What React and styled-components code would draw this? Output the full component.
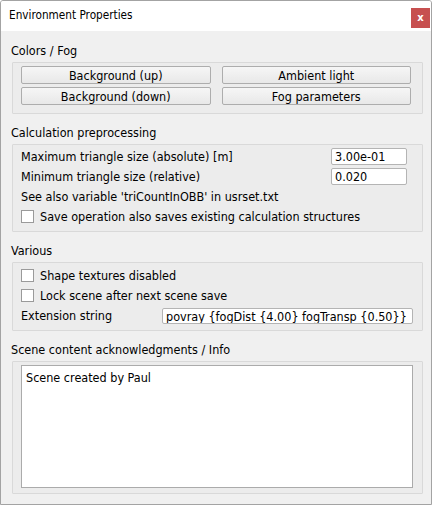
import React from 'react'
import styled, { createGlobalStyle } from 'styled-components'

const GlobalStyle = createGlobalStyle`
  html, body {
    margin: 0;
    padding: 0;
    background: #ffffff;
  }
  body {
    font-family: "DejaVu Sans Condensed", "DejaVu Sans", sans-serif;
    font-size: 12.5px;
    color: #000;
  }
`

const Window = styled.div`
  width: 432px;
  height: 505px;
  box-sizing: border-box;
  border: 1px solid #a3a3a3;
  border-radius: 3px 3px 0 0;
  display: flex;
  flex-direction: column;
  background: #f0f0f0;
  overflow: hidden;
`

const TitleBar = styled.div`
  height: 30px;
  flex: none;
  background: #ffffff;
  display: flex;
  align-items: center;
  padding: 0 1px 0 8px;
  font-size: 11.7px;
`

const Title = styled.span`
  flex: 1;
  margin-top: -2px;
`

const CloseButton = styled.button`
  width: 19px;
  height: 20px;
  margin-top: 4px;
  border: none;
  padding: 0;
  background: #c75050;
  color: #fff;
  font-family: "DejaVu Sans", sans-serif;
  font-weight: bold;
  font-size: 10px;
  line-height: 20px;
`

const Body = styled.div`
  flex: 1;
  display: flex;
  flex-direction: column;
  padding: 12px 8px 0 10px;
`

const Caption = styled.div`
  height: 16px;
  line-height: 16px;
  margin: ${({ $first }) => ($first ? '0' : '11px')} 0 3px 0;
`

const Group = styled.div`
  margin-left: 1px;
  border: 1px solid #d9d9d9;
  background: #ececec;
  border-radius: 1px;
  padding: ${({ $pad }) => $pad || '3px 11px 8px 8px'};
  display: flex;
  flex-direction: column;
  gap: ${({ $gap }) => $gap || '3px'};
  flex: ${({ $grow }) => ($grow ? 1 : 'none')};
`

const ButtonGrid = styled.div`
  display: grid;
  grid-template-columns: 1fr 1fr;
  column-gap: 11px;
  row-gap: 3px;
`

const PushButton = styled.button`
  height: 18px;
  box-sizing: border-box;
  border: 1px solid #adadad;
  border-radius: 2px;
  background: linear-gradient(#f6f6f6, #e8e8e8);
  font-family: inherit;
  font-size: 12.5px;
  color: #000;
  padding: 0;
  line-height: 15px;
`

const FormRow = styled.div`
  display: flex;
  align-items: center;
  justify-content: space-between;
  height: 17px;
`

const Field = styled.div`
  width: ${({ $w }) => $w}px;
  height: ${({ $h }) => $h || 17}px;
  box-sizing: border-box;
  border: 1px solid #b4b4b4;
  border-radius: 2px;
  background: #fff;
  padding: 0 3px;
  line-height: 15px;
  white-space: nowrap;
  overflow: hidden;
`

const Note = styled.div`
  height: 16px;
  line-height: 16px;
  margin-top: ${({ $mt }) => $mt || 0}px;
`

const CheckRow = styled.label`
  display: flex;
  align-items: center;
  gap: 6px;
  height: ${({ $h }) => $h || 17}px;
`

const CheckBox = styled.span`
  width: 13px;
  height: 13px;
  box-sizing: border-box;
  border: 1px solid #9a9a9a;
  background: #fff;
  flex: none;
`

const InfoArea = styled.div`
  flex: 1;
  border: 1px solid #ababab;
  background: #fff;
  padding: 4px 4px;
  line-height: 16px;
`

export default function App() {
  return (
    <>
      <GlobalStyle />
      <Window>
        <TitleBar>
          <Title>Environment Properties</Title>
          <CloseButton>x</CloseButton>
        </TitleBar>
        <Body>
          <Caption $first>Colors / Fog</Caption>
          <Group>
            <ButtonGrid>
              <PushButton>Background (up)</PushButton>
              <PushButton>Ambient light</PushButton>
              <PushButton>Background (down)</PushButton>
              <PushButton>Fog parameters</PushButton>
            </ButtonGrid>
          </Group>

          <Caption>Calculation preprocessing</Caption>
          <Group $pad="3px 15px 7px 8px">
            <FormRow>
              <span>Maximum triangle size (absolute) [m]</span>
              <Field $w={76}>3.00e-01</Field>
            </FormRow>
            <FormRow>
              <span>Minimum triangle size (relative)</span>
              <Field $w={76}>0.020</Field>
            </FormRow>
            <Note $mt={1}>See also variable 'triCountInOBB' in usrset.txt</Note>
            <CheckRow $h={16}>
              <CheckBox />
              Save operation also saves existing calculation structures
            </CheckRow>
          </Group>

          <Caption>Various</Caption>
          <Group $pad="5px 9px 6px 8px" $gap="4px">
            <CheckRow $h={15}>
              <CheckBox />
              Shape textures disabled
            </CheckRow>
            <CheckRow $h={16}>
              <CheckBox />
              Lock scene after next scene save
            </CheckRow>
            <FormRow>
              <span>Extension string</span>
              <Field $w={251} $h={16}>povray {'{'}fogDist {'{'}4.00{'}'} fogTransp {'{'}0.50{'}}'}</Field>
            </FormRow>
          </Group>

          <Caption>Scene content acknowledgments / Info</Caption>
          <Group $pad="3px 9px 5px 8px" $grow>
            <InfoArea>Scene created by Paul</InfoArea>
          </Group>
          <div style={{ height: 10 }} />
        </Body>
      </Window>
    </>
  )
}
